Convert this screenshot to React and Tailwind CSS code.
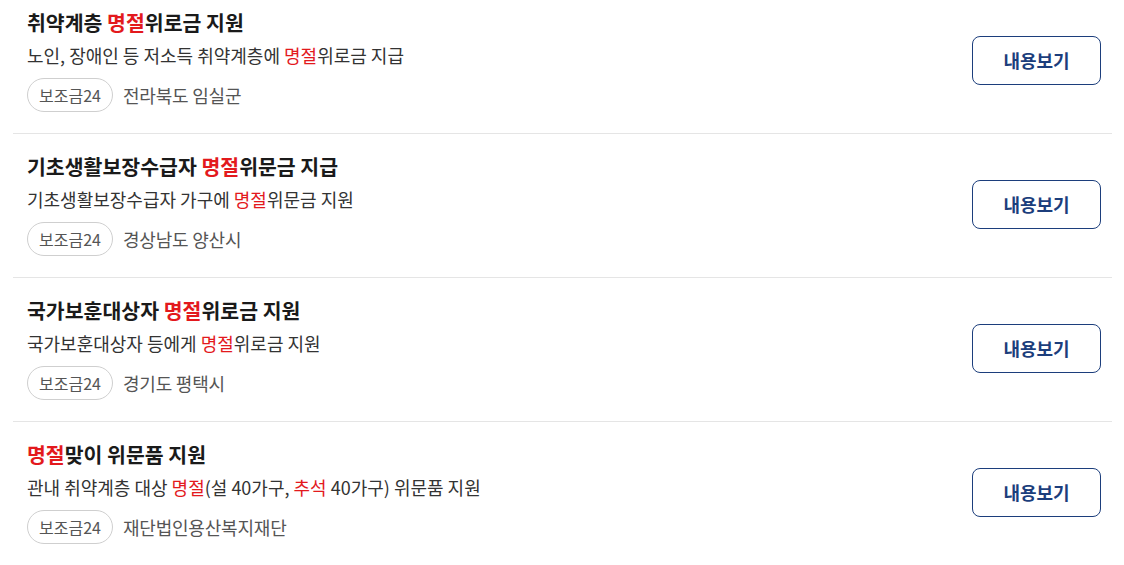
const items = [
  {
    title: [['취약계층 '], ['명절', true], ['위로금 지원']],
    desc: [['노인, 장애인 등 저소득 취약계층에 '], ['명절', true], ['위로금 지급']],
    org: '전라북도 임실군',
  },
  {
    title: [['기초생활보장수급자 '], ['명절', true], ['위문금 지급']],
    desc: [['기초생활보장수급자 가구에 '], ['명절', true], ['위문금 지원']],
    org: '경상남도 양산시',
  },
  {
    title: [['국가보훈대상자 '], ['명절', true], ['위로금 지원']],
    desc: [['국가보훈대상자 등에게 '], ['명절', true], ['위로금 지원']],
    org: '경기도 평택시',
  },
  {
    title: [['명절', true], ['맞이 위문품 지원']],
    desc: [['관내 취약계층 대상 '], ['명절', true], ['(설 40가구, '], ['추석', true], [' 40가구) 위문품 지원']],
    org: '재단법인용산복지재단',
  },
]

const Parts = ({ parts }) =>
  parts.map(([text, hit], i) => (
    <span key={i} className={hit ? 'text-[#e3191d]' : undefined}>
      {text}
    </span>
  ))

const ResultRow = ({ item }) => (
  <li className="flex items-center justify-between border-b border-[#e5e5e5] pt-[18px] pb-[21px] pl-[14px] pr-[11px]">
    <div className="flex flex-col">
      <h3 className="text-[20.5px] leading-[28px] font-bold text-[#1a1a1a]">
        <Parts parts={item.title} />
      </h3>
      <p className="mt-[6px] text-[18px] leading-[26px] text-[#333]">
        <Parts parts={item.desc} />
      </p>
      <div className="mt-[10px] flex items-center gap-[10px]">
        <span className="flex h-[34px] items-center rounded-full border border-[#cfcfcf] px-[11px] text-[16px] text-[#555]">
          보조금24
        </span>
        <span className="text-[18px] text-[#555] tracking-[-0.2px]">{item.org}</span>
      </div>
    </div>
    <button className="h-[49px] w-[129px] rounded-[8px] border border-[#1c3e7c] bg-white text-[18px] font-bold text-[#1c3e7c]">
      내용보기
    </button>
  </li>
)

export default function App() {
  return (
    <div
      className="min-h-screen bg-white"
      style={{ fontFamily: '"Noto Sans CJK KR", "Noto Sans", sans-serif' }}
    >
      <ul className="-mt-[10px] ml-[13px] mr-[12px]">
        {items.map((item, i) => (
          <ResultRow key={i} item={item} />
        ))}
      </ul>
    </div>
  )
}
